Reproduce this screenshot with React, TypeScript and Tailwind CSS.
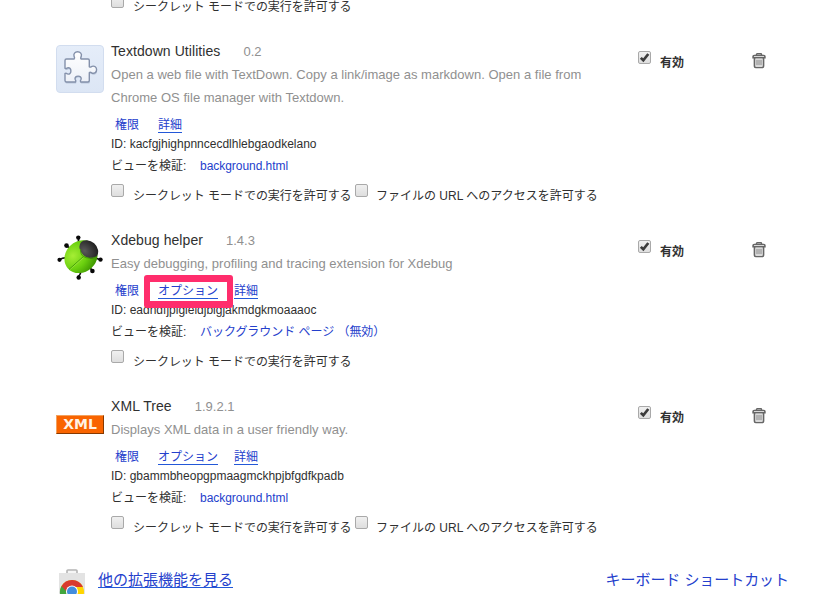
import type { ReactNode } from "react";

const LINK = "text-[#2440cc]";

function Checkbox({ checked = false }: { checked?: boolean }) {
  return (
    <span className="relative block h-[13px] w-[13px] shrink-0 rounded-[2px] border border-[#a9a9a9] bg-linear-to-b from-[#f0f0f0] to-[#dedede]">
      {checked && (
        <svg className="absolute -top-px -left-px" width="13" height="13" viewBox="0 0 13 13">
          <path d="M2.800 6.900 5.300 9.300 10.300 3" fill="none" stroke="#3c3c3c" strokeWidth="2.700" />
        </svg>
      )}
    </span>
  );
}

function Trash() {
  return (
    <svg width="14" height="16" viewBox="0 0 14 16" fill="none" stroke="#666">
      <path d="M4.500 2V1.500q0-.7.7-.7h3.600q.7 0 .7.700V2" strokeWidth="1.500" />
      <path d="M1.100 4.700V3.500q0-1 1-1h9.800q1 0 1 1v1.200z" strokeWidth="1.600" />
      <path d="M2.500 5v8.300q0 1.200 1.200 1.200h6.600q1.200 0 1.200-1.200V5" strokeWidth="1.700" />
      <path d="M5 6.500v6M7 6.500v6M9 6.500v6" strokeWidth="1" />
    </svg>
  );
}

const PIECE =
  "M10.500 14h7.600c1-1 .4-1.800 0-2.600-.9-2.500.9-4.600 3.500-4.600s4.600 2.100 3.600 4.600c-.4.8-1.100 1.600-.1 2.600h6.900q1.300 0 1.300 1.500v6.200c1 1 1.700.2 2.700-.3 2.500-.9 4.600.8 4.600 3.300s-2.200 4.200-4.700 3.300c-1-.5-1.700-1.200-2.600-.3v7.800q0 1.500-1.500 1.500h-7.100c-.9-.9-.1-1.700.3-2.500.8-2-.9-3.400-2.900-3.400s-3.700 1.400-2.900 3.400c.4.8 1.200 1.600.3 2.500H10.500q-1.500 0-1.500-1.500v-6.900c.9-.9 1.700-.1 2.500.3 2 .8 3.400-.900 3.400-3s-1.400-3.800-3.400-3c-.8.4-1.600 1.200-2.500.3v-7.700q0-1.500 1.500-1.500z";

function PuzzleIcon() {
  return (
    <svg width="48" height="48" viewBox="0 0 48 48">
      <defs>
        <linearGradient id="tile" x2="0" y2="1">
          <stop stopColor="#e5edf9" />
          <stop offset="1" stopColor="#dce6f5" />
        </linearGradient>
        <linearGradient id="piece" x2="0" y2="1">
          <stop stopColor="#fff" />
          <stop offset="1" stopColor="#edf1f8" />
        </linearGradient>
      </defs>
      <rect x=".5" y=".5" width="47" height="47" rx="3.500" fill="url(#tile)" stroke="#d2ddef" />
      <path d={PIECE} fill="#8f9fbb" opacity=".45" transform="translate(.5 1.500)" />
      <path d={PIECE} fill="url(#piece)" stroke="#8491ab" strokeWidth="1.400" />
    </svg>
  );
}

function BugIcon() {
  return (
    <svg width="48" height="48" viewBox="0 0 48 48">
      <defs>
        <radialGradient id="shell" cx=".35" cy=".3" r=".75">
          <stop stopColor="#a6ee35" />
          <stop offset=".55" stopColor="#6bd00f" />
          <stop offset="1" stopColor="#3d9500" />
        </radialGradient>
        <radialGradient id="head" cx=".4" cy=".75" r=".8">
          <stop stopColor="#5a5a5a" />
          <stop offset="1" stopColor="#1c1c1c" />
        </radialGradient>
      </defs>
      <g fill="none" stroke="#111" strokeWidth="1.700">
        <path d="M22.500 4.500V10M10.500 12l5 3M4 25.500q3-2 6-1.500M22.500 42.500q3-3 2-7M36 36.500l-4-6M43.500 25.500 37 23" />
      </g>
      <g fill="#080808">
        <circle cx="22.300" cy="3.600" r="2.200" />
        <circle cx="10.500" cy="11.600" r="2.300" />
        <circle cx="3.500" cy="25.800" r="2.100" />
        <circle cx="22.700" cy="43.500" r="2.200" />
        <circle cx="36.400" cy="37" r="2.300" />
        <circle cx="44.500" cy="25.600" r="2.200" />
      </g>
      <ellipse cx="25" cy="22.700" rx="17.500" ry="15.400" transform="rotate(-43 25 22.700)" fill="url(#shell)" />
      <ellipse cx="32.800" cy="15.300" rx="10.400" ry="8" transform="rotate(42 32.800 15.300)" fill="url(#head)" />
      <path d="M27.500 22.500 13 35.500M24.500 15q0 6 3 7.500 5 3 12.500 .500" fill="none" stroke="#3e9a05" strokeWidth=".900" />
      <path d="M27 24 13.500 36" fill="none" stroke="#b1ed57" strokeWidth=".500" />
    </svg>
  );
}

function XmlIcon() {
  return (
    <div className="mt-[15px] flex h-[19px] w-[48px] items-center justify-center border border-t-[#f3a15d] border-l-[#f3a15d] border-r-[#873900] border-b-[#873900] bg-[#f96400] font-['DejaVu_Sans',sans-serif] text-[14px] leading-[17px] font-bold text-[#fff3e5]">
      XML
    </div>
  );
}

function StoreIcon() {
  return (
    <svg width="26" height="25" viewBox="0 0 26 25">
      <path d="M0 4h26v21H0z" fill="#e3e3e3" />
      <path d="M8 2h10v2H8z" fill="#f6f6f6" />
      <path d="M8 4V1.700Q8 1 9 1h8q1 0 1 .700V4" fill="none" stroke="#b4b4b4" strokeWidth="1.600" />
      <circle cx="13" cy="23" r="12" fill="#ffd500" />
      <path d="M13 23 2.500 17A12 12 0 0 0 5 32z" fill="#42a63e" />
      <path d="M2.500 17.200A12 12 0 0 1 24 18H13l-5 5z" fill="#d83a2e" />
      <circle cx="13" cy="22.500" r="6" fill="#fff" />
      <circle cx="13" cy="22.500" r="5" fill="#438ddd" />
    </svg>
  );
}

function Permissions({ fileAccess }: { fileAccess?: boolean }) {
  return (
    <div className="flex h-[23px] items-start whitespace-nowrap">
      <Checkbox />
      <span className="ml-[9px] w-[222px] leading-[25px] tracking-[-0.04px]">
        シークレット モードでの実行を許可する
      </span>
      {fileAccess && (
        <>
          <Checkbox />
          <span className="ml-[8px] leading-[25px]">ファイルの URL へのアクセスを許可する</span>
        </>
      )}
    </div>
  );
}

type ExtensionProps = {
  icon: ReactNode;
  name: ReactNode;
  version: string;
  description: ReactNode;
  options?: "plain" | "highlighted";
  id: ReactNode;
  view: ReactNode;
  fileAccess?: boolean;
};

function Extension({ icon, name, version, description, options, id, view, fileAccess }: ExtensionProps) {
  return (
    <section className="flex pl-[56px]">
      <div className="w-[55px] shrink-0 pt-[5px]">{icon}</div>
      <div className="w-[527px] shrink-0">
        <div className="flex h-[23px] items-center gap-[23px] whitespace-nowrap">
          <h2 className="text-[14px] tracking-[0.07px]">{name}</h2>
          <span className="text-[13px] text-[#909090]">{version}</span>
        </div>
        <p className="text-[13px] leading-[23px] tracking-[0.02px] whitespace-nowrap text-[#909090]">{description}</p>
        <div className={`mt-[6px] flex h-[20px] items-center pl-[4px] leading-[20px] ${LINK}`}>
          <a className="w-[43px]">権限</a>
          {options && (
            <a className="relative mr-[16px] w-[60px] border-b border-[#2358d8] leading-[14px]">
              オプション
              {options === "highlighted" && (
                <span className="absolute -top-[9px] -left-[14px] h-[33px] w-[89px] rounded-[3px] border-x-[6px] border-y-[7px] border-[#ff2d6c]" />
              )}
            </a>
          )}
          <a className="border-b border-[#2358d8] leading-[14px]">詳細</a>
        </div>
        <div className="-mt-[1px] h-[20px] leading-[20px] whitespace-nowrap">ID: {id}</div>
        <div className="mt-[1px] flex h-[22px] items-center whitespace-nowrap">
          <span className="w-[89px]">ビューを検証:</span>
          <a className={`tracking-[-0.04px] ${LINK}`}>{view}</a>
        </div>
        <div className="mt-[7px]">
          <Permissions fileAccess={fileAccess} />
        </div>
      </div>
      <div className="flex h-[36px] w-[114px] shrink-0 pt-[11px]">
        <Checkbox checked />
        <span className="ml-[9px] text-[12px] leading-[25px] font-bold">有効</span>
      </div>
      <div className="pt-[13px]">
        <Trash />
      </div>
    </section>
  );
}

export default function App() {
  return (
    <main className="h-[603px] w-[816px] overflow-hidden bg-white font-['Liberation_Sans','Noto_Sans_CJK_JP',sans-serif] text-[12px] text-[#303030]">
      <div className="-mt-[5px] pl-[111px]">
        <Permissions />
      </div>
      <div className="mt-[22px] h-[189px]">
        <Extension
          icon={<PuzzleIcon />}
          name="Textdown Utilities"
          version="0.2"
          description={
            <>
              Open a web file with TextDown. Copy a link/image as markdown. Open a file from
              <br />
              Chrome OS file manager with Textdown.
            </>
          }
          id="kacfgjhighpnncecdlhlebgaodkelano"
          view="background.html"
          fileAccess
        />
      </div>
      <div className="h-[166px]">
        <Extension
          icon={<BugIcon />}
          name="Xdebug helper"
          version="1.4.3"
          description="Easy debugging, profiling and tracing extension for Xdebug"
          options="highlighted"
          id="eadndfjplgieldjbigjakmdgkmoaaaoc"
          view="バックグラウンド ページ （無効）"
        />
      </div>
      <div className="h-[174px]">
        <Extension
          icon={<XmlIcon />}
          name="XML Tree"
          version="1.9.2.1"
          description="Displays XML data in a user friendly way."
          options="plain"
          id="gbammbheopgpmaagmckhpjbfgdfkpadb"
          view="background.html"
          fileAccess
        />
      </div>
      <footer className={`flex h-[25px] pr-[27px] pl-[59px] text-[15px] ${LINK}`}>
        <StoreIcon />
        <a className="ml-[13px] h-[19px] border-b border-[#2358d8] leading-[22px]">他の拡張機能を見る</a>
        <a className="ml-auto leading-[22px] tracking-[-0.06px]">キーボード ショートカット</a>
      </footer>
    </main>
  );
}
